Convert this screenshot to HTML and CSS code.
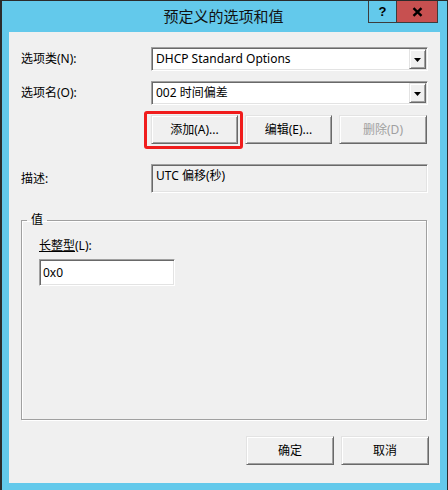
FILE: index.html
```html
<!DOCTYPE html>
<html lang="zh-CN">
<head>
<meta charset="utf-8">
<title>预定义的选项和值</title>
<link rel="stylesheet" href="styles.css">
</head>
<body>
<div class="window">
  <div class="titlebar">
    <div class="title">预定义的选项和值</div>
    <div class="caption-btn help">?</div>
    <div class="caption-btn close">
      <svg width="11" height="10" viewBox="0 0 11 10"><path d="M1.5 1.2 L9.5 8.8 M9.5 1.2 L1.5 8.8" stroke="#000" stroke-width="2.4" fill="none"/></svg>
    </div>
  </div>
  <div class="client">
    <div class="form">
      <div class="lbl">选项类(N):</div>
      <div class="combo">
        <span class="combo-text">DHCP Standard Options</span>
        <span class="combo-btn"><svg width="7" height="4" viewBox="0 0 7 4"><path d="M0 0 H7 L3.5 4 Z" fill="#000"/></svg></span>
      </div>
      <div class="lbl">选项名(O):</div>
      <div class="combo">
        <span class="combo-text">002 时间偏差</span>
        <span class="combo-btn"><svg width="7" height="4" viewBox="0 0 7 4"><path d="M0 0 H7 L3.5 4 Z" fill="#000"/></svg></span>
      </div>
    </div>
    <div class="btn-row">
      <span class="highlight"><button class="btn">添加(A)...</button></span>
      <button class="btn">编辑(E)...</button>
      <button class="btn btn-wide disabled">删除(D)</button>
    </div>
    <div class="desc-row">
      <div class="lbl">描述:</div>
      <div class="desc">UTC 偏移(秒)</div>
    </div>
    <fieldset class="group">
      <legend>值</legend>
      <div class="group-body">
        <div class="field-label"><span class="ul">长整型</span>(L):</div>
        <div class="textbox">0x0</div>
      </div>
    </fieldset>
    <div class="footer">
      <button class="btn btn-wide">确定</button>
      <button class="btn btn-wide">取消</button>
    </div>
  </div>
</div>
</body>
</html>
```

FILE: styles.css
```css
html, body {
  margin: 0;
  padding: 0;
  background: #63c9eb;
}

.window {
  width: 448px;
  height: 490px;
  box-sizing: border-box;
  background: #63c9eb;
  border-left: 2px solid #2b2b2b;
  border-top: 1px solid #2b2b2b;
  border-right: 1px solid #2b2b2b;
  font-family: "Noto Sans", "Noto Sans CJK SC", sans-serif;
  font-size: 12px;
  color: #000;
  display: flex;
  flex-direction: column;
}

.titlebar {
  height: 31px;
  display: flex;
  align-items: flex-start;
  padding-left: 77px;
  padding-right: 9px;
}

.title {
  flex: 1;
  text-align: center;
  line-height: 31px;
  font-size: 15px;
  color: #111;
}

.caption-btn {
  height: 22px;
  box-sizing: border-box;
  border: 1px solid #3c3c3c;
  border-top: 0;
  display: flex;
  align-items: center;
  justify-content: center;
}

.help {
  width: 28px;
  border-right: 0;
  font-family: "Liberation Sans", sans-serif;
  font-weight: bold;
  font-size: 13px;
  line-height: 1;
  padding-bottom: 1px;
}

.close {
  width: 42px;
  background: #c75050;
}

.client {
  margin-left: 7px;
  width: 431px;
  height: 451px;
  box-sizing: border-box;
  background: #f0f0f0;
  padding: 15px 0 0 12px;
}

.form {
  display: grid;
  grid-template-columns: 130px 277px;
  row-gap: 10px;
  align-items: center;
}

.lbl {
  line-height: 16px;
  white-space: nowrap;
}

.combo {
  height: 24px;
  box-sizing: border-box;
  border: 1px solid;
  border-color: #a0a0a0 #fff #fff #a0a0a0;
  box-shadow: inset 1px 1px 0 #696969, inset -1px -1px 0 #e3e3e3;
  padding: 1px;
  background: #fff;
  display: flex;
}

.combo-text {
  flex: 1;
  padding-left: 3px;
  line-height: 20px;
  white-space: nowrap;
}

.combo-btn {
  width: 17px;
  box-sizing: border-box;
  border: 1px solid;
  border-color: #e3e3e3 #696969 #696969 #e3e3e3;
  box-shadow: inset 1px 1px 0 #fff, inset -1px -1px 0 #a0a0a0;
  background: #f0f0f0;
  display: flex;
  align-items: center;
  justify-content: center;
  padding-top: 1px;
}

.btn-row {
  display: flex;
  gap: 7px;
  margin-top: 10px;
  padding-left: 130px;
}

.btn {
  width: 87px;
  height: 29px;
  box-sizing: border-box;
  border: 1px solid;
  border-color: #e3e3e3 #696969 #696969 #e3e3e3;
  box-shadow: inset 1px 1px 0 #fff, inset -1px -1px 0 #a0a0a0;
  background: #f0f0f0;
  font: inherit;
  color: #000;
  padding: 0;
  margin: 0;
  line-height: 16px;
}

.btn-wide {
  width: 88px;
}

.disabled {
  color: #a0a0a0;
}

.highlight {
  position: relative;
  display: inline-flex;
}

.highlight::after {
  content: "";
  position: absolute;
  top: -4px;
  left: -7px;
  right: -5px;
  bottom: -5px;
  border: 3px solid #f01c1c;
  border-radius: 3px;
}

.desc-row {
  display: grid;
  grid-template-columns: 130px 277px;
  align-items: center;
  margin-top: 20px;
}

.desc {
  height: 29px;
  box-sizing: border-box;
  border: 1px solid;
  border-color: #a0a0a0 #fff #fff #a0a0a0;
  box-shadow: inset 1px 1px 0 #696969, inset -1px -1px 0 #e3e3e3;
  padding: 3px 4px 0 4px;
  line-height: 16px;
}

.group {
  margin: 19px 0 0 0;
  padding: 0;
  width: 406px;
  height: 208px;
  box-sizing: border-box;
  border: 1px solid #a0a0a0;
  box-shadow: 1px 1px 0 #fff, inset 1px 1px 0 #fff;
  min-width: 0;
}

.group legend {
  margin-left: 5px;
  padding: 0 4px;
  line-height: 16px;
  font-size: 12px;
}

.group-body {
  padding: 10px 0 0 17px;
}

.field-label {
  line-height: 16px;
}

.ul {
  text-decoration: underline;
}

.textbox {
  margin-top: 5px;
  width: 136px;
  height: 27px;
  box-sizing: border-box;
  border: 1px solid;
  border-color: #a0a0a0 #fff #fff #a0a0a0;
  box-shadow: inset 1px 1px 0 #696969, inset -1px -1px 0 #e3e3e3;
  background: #fff;
  padding-left: 3px;
  line-height: 25px;
}

.footer {
  display: flex;
  justify-content: flex-end;
  gap: 7px;
  margin-top: 16px;
  padding-right: 11px;
}
```
